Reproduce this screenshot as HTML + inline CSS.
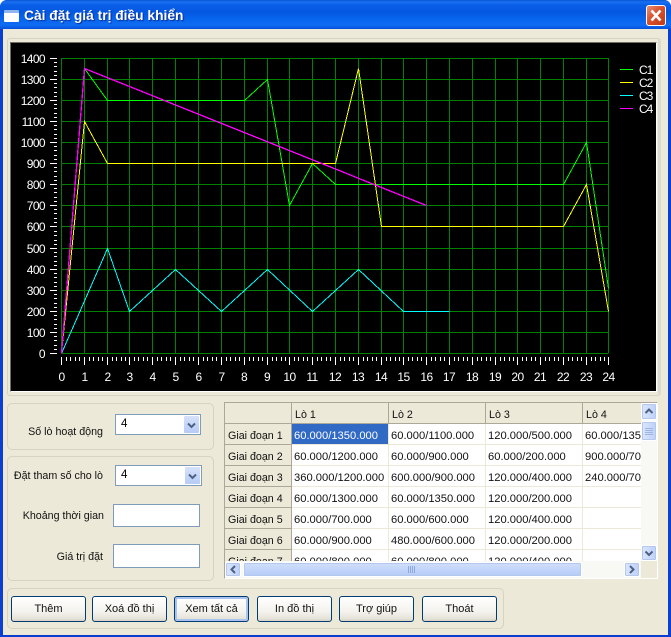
<!DOCTYPE html>
<html><head><meta charset="utf-8"><style>
html,body{margin:0;padding:0;background:#fff}
body{width:671px;height:637px;overflow:hidden;position:relative;font:11.5px "Liberation Sans","Noto Sans CJK SC",sans-serif;color:#000}
div{box-sizing:border-box}
.a{position:absolute}
#win{left:0;top:0;width:671px;height:637px;background:#0a3fd0;border-radius:7px 7px 0 0;overflow:hidden}
#tb{left:0;top:0;width:671px;height:29px;background:linear-gradient(#0a56d8 0,#1a6ff0 2px,#0a5fe8 5px,#0458e0 12px,#0866ee 20px,#0f6cf2 25px,#0550dc 29px)}
#tt{left:24px;top:8px;font:bold 13.8px "Liberation Sans","Noto Sans CJK SC",sans-serif;color:#fff;text-shadow:1px 1px 1px #0a2a90;white-space:nowrap}
#body{left:3px;top:29px;width:665px;height:606px;background:#ece9d8}
.gb{border:1px solid #d6d3c2;border-radius:5px}
.lb{position:absolute;white-space:nowrap;text-align:right;height:14px;line-height:14px;color:#111;font-size:10.7px}
.cb{position:absolute;background:#fff;border:1px solid #7f9db9}
.cb span{position:absolute;left:5px;top:2px;line-height:14px}
.cb i{position:absolute;right:1px;top:1px;width:15px;bottom:1px;background:linear-gradient(#d6e2fb,#b6cbf6);border-radius:1px}
.ip{position:absolute;background:#fff;border:1px solid #7f9db9}
.bt{position:absolute;top:596px;width:75px;height:26px;border:1px solid #003c74;border-radius:3px;background:linear-gradient(#fff,#f4f3ee 60%,#e6e3d8 90%,#d6d0c5);text-align:center;line-height:24px;color:#111;font-size:11px}
.sb{position:absolute;background:linear-gradient(90deg,#dbe7fd,#bcd0f8);border:1px solid #fff;border-radius:2px;box-shadow:0 0 0 1px #b4c8ee inset}
table{border-collapse:separate;border-spacing:0;table-layout:fixed;position:absolute;left:0;top:0;width:455px}
td{height:21px;padding:4px 0 0 2px;box-sizing:border-box;border-right:1px solid #ece9d8;border-bottom:1px solid #ece9d8;white-space:nowrap;overflow:hidden;background:#fff;line-height:16px;font-size:11.2px;color:#111}
td.h{background:#ece9d8;border-right:1px solid #aca899;border-bottom:1px solid #aca899;padding-left:3px;font-size:10.7px}
td.s{background:#316ac5;color:#fff}
</style></head><body>
<div class="a" id="win">
<div class="a" id="tb"></div>
<div class="a" style="left:4px;top:10px;width:15px;height:12px;background:#fff;border-top:3px solid #8fb4ee;border-radius:1px"></div>
<div class="a" id="tt">Cài đặt giá trị điều khiển</div>
<div class="a" style="left:646px;top:5px;width:20px;height:21px;border:1px solid #fff;border-radius:3px;background:linear-gradient(135deg,#e8907a,#d8502c 45%,#c03a18)">
<svg width="18" height="19" style="display:block"><path d="M4.5 4.5L13.5 14.5M13.5 4.5L4.5 14.5" stroke="#fff" stroke-width="2.6" fill="none"/></svg></div>
<div class="a" id="body"></div>

<div class="a" style="left:7px;top:38px;width:654px;height:358px;border:1px solid #d6d3c2;border-right:3px solid #dcdad0;border-radius:3px"></div>
<div class="a" style="left:10px;top:42px;width:647px;height:350px;background:#000;border-top:1px solid #716f64;border-left:1px solid #716f64;border-right:1px solid #fff;border-bottom:1px solid #fff"></div>

<svg class="a" style="left:0;top:0" width="671" height="400" shape-rendering="crispEdges">
<defs>
<path id="mx" d="M5.5 357v4M9.5 357v4M14.5 357v4M18.5 357v4" stroke="#fff" fill="none"/>
<path id="my" d="M54 -3.5h3M54 -7.5h3M54 -12.5h3M54 -16.5h3" stroke="#fff" fill="none"/>
</defs>
<path stroke="#008000" fill="none" d="M61.5 58.5H608.5M61.5 79.5H608.5M61.5 100.5H608.5M61.5 121.5H608.5M61.5 142.5H608.5M61.5 163.5H608.5M61.5 184.5H608.5M61.5 205.5H608.5M61.5 226.5H608.5M61.5 248.5H608.5M61.5 269.5H608.5M61.5 290.5H608.5M61.5 311.5H608.5M61.5 332.5H608.5M61.5 353.5H608.5
M61.5 58V353M84.5 58V353M107.5 58V353M129.5 58V353M152.5 58V353M175.5 58V353M198.5 58V353M221.5 58V353M244.5 58V353M267.5 58V353M289.5 58V353M312.5 58V353M335.5 58V353M358.5 58V353M381.5 58V353M403.5 58V353M426.5 58V353M449.5 58V353M472.5 58V353M495.5 58V353M517.5 58V353M540.5 58V353M563.5 58V353M586.5 58V353M608.5 58V353"/>
<path stroke="#fff" fill="none" d="M50 58.5h7M50 79.5h7M50 100.5h7M50 121.5h7M50 142.5h7M50 163.5h7M50 184.5h7M50 205.5h7M50 226.5h7M50 248.5h7M50 269.5h7M50 290.5h7M50 311.5h7M50 332.5h7M50 353.5h7
M61.5 357v8M84.5 357v8M107.5 357v8M129.5 357v8M152.5 357v8M175.5 357v8M198.5 357v8M221.5 357v8M244.5 357v8M267.5 357v8M289.5 357v8M312.5 357v8M335.5 357v8M358.5 357v8M381.5 357v8M403.5 357v8M426.5 357v8M449.5 357v8M472.5 357v8M495.5 357v8M517.5 357v8M540.5 357v8M563.5 357v8M586.5 357v8M608.5 357v8"/>
<g>
<use href="#my" y="353"/><use href="#my" y="332"/><use href="#my" y="311"/><use href="#my" y="290"/><use href="#my" y="269"/><use href="#my" y="248"/><use href="#my" y="226"/><use href="#my" y="205"/><use href="#my" y="184"/><use href="#my" y="163"/><use href="#my" y="142"/><use href="#my" y="121"/><use href="#my" y="100"/><use href="#my" y="79"/>
<use href="#mx" x="61"/><use href="#mx" x="84"/><use href="#mx" x="107"/><use href="#mx" x="129"/><use href="#mx" x="152"/><use href="#mx" x="175"/><use href="#mx" x="198"/><use href="#mx" x="221"/><use href="#mx" x="244"/><use href="#mx" x="267"/><use href="#mx" x="289"/><use href="#mx" x="312"/><use href="#mx" x="335"/><use href="#mx" x="358"/><use href="#mx" x="381"/><use href="#mx" x="403"/><use href="#mx" x="426"/><use href="#mx" x="449"/><use href="#mx" x="472"/><use href="#mx" x="495"/><use href="#mx" x="517"/><use href="#mx" x="540"/><use href="#mx" x="563"/><use href="#mx" x="586"/>
</g>
<g fill="none" stroke-width="1">
<polyline stroke="#00ff00" points="61.5,353.5 84.5,68.5 107.5,100.5 244.5,100.5 267.5,79.5 289.5,205.5 312.5,163.5 335.5,184.5 563.5,184.5 586.5,142.5 608.5,288.5"/>
<polyline stroke="#ffff00" points="61.5,353.5 84.5,121.5 107.5,163.5 335.5,163.5 358.5,68.5 381.5,226.5 563.5,226.5 586.5,184.5 608.5,311.5"/>
<polyline stroke="#00ffff" points="61.5,353.5 107.5,248.5 129.5,311.5 175.5,269.5 221.5,311.5 267.5,269.5 312.5,311.5 358.5,269.5 403.5,311.5 449.5,311.5"/>
<polyline stroke="#ff00ff" stroke-width="1.3" points="61.5,353.5 84.5,68.5 426.5,205.5"/>
<path stroke="#00ff00" d="M620 69.5h13"/><path stroke="#ffff00" d="M620 82.5h13"/><path stroke="#00ffff" d="M620 95.5h13"/><path stroke="#ff00ff" d="M620 108.5h13"/>
</g>
</svg>
<svg class="a" style="left:0;top:0" width="671" height="400" font-family="Liberation Sans" font-size="12" fill="#fff" letter-spacing="-.6">
<g text-anchor="end">
<text x="45" y="63">1400</text><text x="45" y="84">1300</text><text x="45" y="105">1200</text><text x="45" y="126">1100</text><text x="45" y="147">1000</text><text x="45" y="168">900</text><text x="45" y="189">800</text><text x="45" y="210">700</text><text x="45" y="231">600</text><text x="45" y="253">500</text><text x="45" y="274">400</text><text x="45" y="295">300</text><text x="45" y="316">200</text><text x="45" y="337">100</text><text x="45" y="358">0</text>
</g>
<g text-anchor="middle">
<text x="61.5" y="381">0</text><text x="84.5" y="381">1</text><text x="107.5" y="381">2</text><text x="129.5" y="381">3</text><text x="152.5" y="381">4</text><text x="175.5" y="381">5</text><text x="198.5" y="381">6</text><text x="221.5" y="381">7</text><text x="244" y="381">8</text><text x="267" y="381">9</text><text x="289.5" y="381">10</text><text x="312" y="381">11</text><text x="335" y="381">12</text><text x="358" y="381">13</text><text x="381" y="381">14</text><text x="403.5" y="381">15</text><text x="426.5" y="381">16</text><text x="449" y="381">17</text><text x="472" y="381">18</text><text x="495" y="381">19</text><text x="517.5" y="381">20</text><text x="540" y="381">21</text><text x="563" y="381">22</text><text x="586" y="381">23</text><text x="608.5" y="381">24</text>
</g>
<g letter-spacing="-1"><text x="639" y="74">C1</text><text x="639" y="87">C2</text><text x="639" y="100">C3</text><text x="639" y="113">C4</text></g>
</svg>

<div class="a gb" style="left:7px;top:403px;width:207px;height:47px"></div>
<div class="a gb" style="left:7px;top:456px;width:207px;height:125px"></div>
<div class="a gb" style="left:7px;top:588px;width:497px;height:41px"></div>

<div class="lb" style="right:568px;top:425px">Số lò hoạt động</div>
<div class="lb" style="right:568px;top:469px">Đặt tham số cho lò</div>
<div class="lb" style="right:567px;top:509px">Khoảng thời gian</div>
<div class="lb" style="right:568px;top:550px">Giá trị đặt</div>

<div class="cb" style="left:115px;top:414px;width:86px;height:21px"><span>4</span><i><svg width="15" height="19" style="display:block"><path d="M4 7.5l3.5 3.5 3.5-3.5" stroke="#4d6185" stroke-width="2" fill="none"/></svg></i></div>
<div class="cb" style="left:115px;top:465px;width:87px;height:21px"><span>4</span><i><svg width="15" height="19" style="display:block"><path d="M4 7.5l3.5 3.5 3.5-3.5" stroke="#4d6185" stroke-width="2" fill="none"/></svg></i></div>
<div class="ip" style="left:113px;top:504px;width:87px;height:23px"></div>
<div class="ip" style="left:113px;top:544px;width:87px;height:24px"></div>

<div class="a" style="left:224px;top:402px;width:434px;height:177px;background:#fff;border:1px solid #aca899;border-right-color:#fff;border-bottom-color:#fff;border-top:1px solid #aca899"></div>
<div class="a" style="left:225px;top:403px;width:416px;height:158px;overflow:hidden">
<table><colgroup><col style="width:67px"><col style="width:97px"><col style="width:97px"><col style="width:97px"><col style="width:97px"></colgroup>
<tr><td class="h"></td><td class="h">Lò 1</td><td class="h">Lò 2</td><td class="h">Lò 3</td><td class="h">Lò 4</td></tr>
<tr><td class="h">Giai đoạn 1</td><td class="s">60.000/1350.000</td><td>60.000/1100.000</td><td>120.000/500.000</td><td>60.000/1350.000</td></tr>
<tr><td class="h">Giai đoạn 2</td><td>60.000/1200.000</td><td>60.000/900.000</td><td>60.000/200.000</td><td>900.000/700.000</td></tr>
<tr><td class="h">Giai đoạn 3</td><td>360.000/1200.000</td><td>600.000/900.000</td><td>120.000/400.000</td><td>240.000/700.000</td></tr>
<tr><td class="h">Giai đoạn 4</td><td>60.000/1300.000</td><td>60.000/1350.000</td><td>120.000/200.000</td><td></td></tr>
<tr><td class="h">Giai đoạn 5</td><td>60.000/700.000</td><td>60.000/600.000</td><td>120.000/400.000</td><td></td></tr>
<tr><td class="h">Giai đoạn 6</td><td>60.000/900.000</td><td>480.000/600.000</td><td>120.000/200.000</td><td></td></tr>
<tr><td class="h">Giai đoạn 7</td><td>60.000/800.000</td><td>60.000/800.000</td><td>120.000/400.000</td><td></td></tr>
</table></div>

<div class="a" style="left:641px;top:403px;width:16px;height:158px;background:#f8f8f4"></div>
<div class="a" style="left:225px;top:561px;width:416px;height:17px;background:#f8f8f4"></div>
<div class="a" style="left:641px;top:561px;width:16px;height:17px;background:#ece9d8"></div>

<div class="sb" style="left:641px;top:403px;width:16px;height:17px"><svg width="14" height="15" style="display:block"><path d="M3.5 9l3.5-3.5 3.5 3.5" stroke="#4d6185" stroke-width="2" fill="none"/></svg></div>
<div class="sb" style="left:641px;top:421px;width:16px;height:20px"><svg width="14" height="18" style="display:block"><path d="M3 6.5h8M3 8.5h8M3 10.5h8M3 12.5h8" stroke="#9fb5e4" fill="none"/></svg></div>
<div class="sb" style="left:641px;top:545px;width:16px;height:16px"><svg width="14" height="14" style="display:block"><path d="M3.5 5.5l3.5 3.5 3.5-3.5" stroke="#4d6185" stroke-width="2" fill="none"/></svg></div>

<div class="sb" style="left:225px;top:562px;width:16px;height:15px"><svg width="14" height="13" style="display:block"><path d="M9 3l-3.5 3.5 3.5 3.5" stroke="#4d6185" stroke-width="2" fill="none"/></svg></div>
<div class="sb" style="left:243px;top:562px;width:339px;height:15px;background:linear-gradient(#d0dffc,#b4caf6)"><svg width="337" height="13" style="display:block"><path d="M164.5 3v7M166.5 3v7M168.5 3v7M170.5 3v7" stroke="#8ea8dc" fill="none"/></svg></div>
<div class="sb" style="left:624px;top:562px;width:16px;height:15px"><svg width="14" height="13" style="display:block"><path d="M5 3l3.5 3.5-3.5 3.5" stroke="#4d6185" stroke-width="2" fill="none"/></svg></div>

<div class="bt" style="left:11px">Thêm</div>
<div class="bt" style="left:92px">Xoá đồ thị</div>
<div class="bt" style="left:174px;box-shadow:inset 0 0 0 2px #a9c2ee">Xem tất cả</div>
<div class="bt" style="left:257px">In đồ thị</div>
<div class="bt" style="left:339px">Trợ giúp</div>
<div class="bt" style="left:422px">Thoát</div>
</div>
</body></html>
